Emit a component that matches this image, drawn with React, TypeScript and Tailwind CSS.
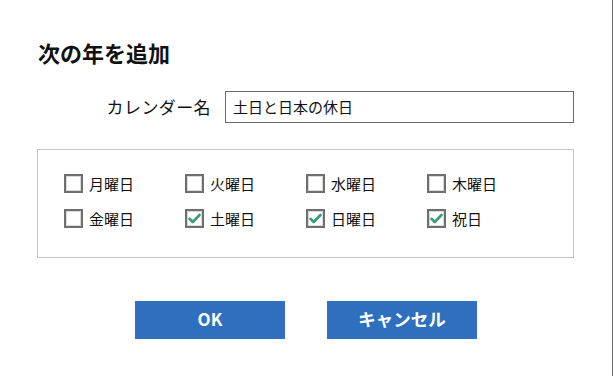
import React from "react";

const days: { label: string; checked: boolean }[] = [
  { label: "月曜日", checked: false },
  { label: "火曜日", checked: false },
  { label: "水曜日", checked: false },
  { label: "木曜日", checked: false },
  { label: "金曜日", checked: false },
  { label: "土曜日", checked: true },
  { label: "日曜日", checked: true },
  { label: "祝日", checked: true },
];

function Box({ checked }: { checked: boolean }) {
  return (
    <span className="flex h-[19px] w-[19px] items-center justify-center border-2 border-[#6f6f6f] bg-white shadow-[inset_0_0_0_1px_#d9d9d9]">
      {checked && (
        <svg width="13" height="11" viewBox="0 0 13 11">
          <path d="M1.5 5.8 L4.8 9 L11.5 2" fill="none" stroke="#3a9a7c" strokeWidth="2.6" strokeLinecap="round" strokeLinejoin="round" />
        </svg>
      )}
    </span>
  );
}

export default function App() {
  return (
    <div
      className="relative h-[376px] w-[613px] overflow-hidden border-r border-[#6d6d6d] bg-white text-[#111]"
      style={{ fontFamily: '"Noto Sans CJK JP", "Noto Sans", sans-serif' }}
    >
      <div className="pl-[38px] pt-[39px]">
        <h1 className="text-[22px] font-bold leading-[26px]">次の年を追加</h1>
      </div>
      <div className="mt-[26px] flex items-center">
        <div className="w-[213px] pr-[2px] text-right text-[17px] leading-[32px] tracking-[0.4px]">カレンダー名</div>
        <div className="ml-[12px] flex h-[32px] w-[349px] items-center border border-[#6a6a66] px-[7px] text-[15px]">
          土日と日本の休日
        </div>
      </div>
      <div className="ml-[37px] mt-[26px] h-[109px] w-[537px] border border-[#c4c4c4] pl-[26px] pt-[24px]">
        <div className="grid grid-cols-[121px_121px_121px_121px] gap-y-[16px]">
          {days.map((d) => (
            <div key={d.label} className="flex h-[19px] items-center">
              <Box checked={d.checked} />
              <span className="ml-[6px] text-[15px] leading-[19px]">{d.label}</span>
            </div>
          ))}
        </div>
      </div>
      <div className="ml-[135px] mt-[43px] flex gap-[42px]">
        <button className="flex h-[38px] w-[150px] items-center justify-center bg-[#2e70be] pb-[2px] text-[17px] font-bold text-white">
          OK
        </button>
        <button className="flex h-[38px] w-[150px] items-center justify-center bg-[#2e70be] pb-[2px] text-[17.5px] font-bold text-white">
          キャンセル
        </button>
      </div>
    </div>
  );
}
